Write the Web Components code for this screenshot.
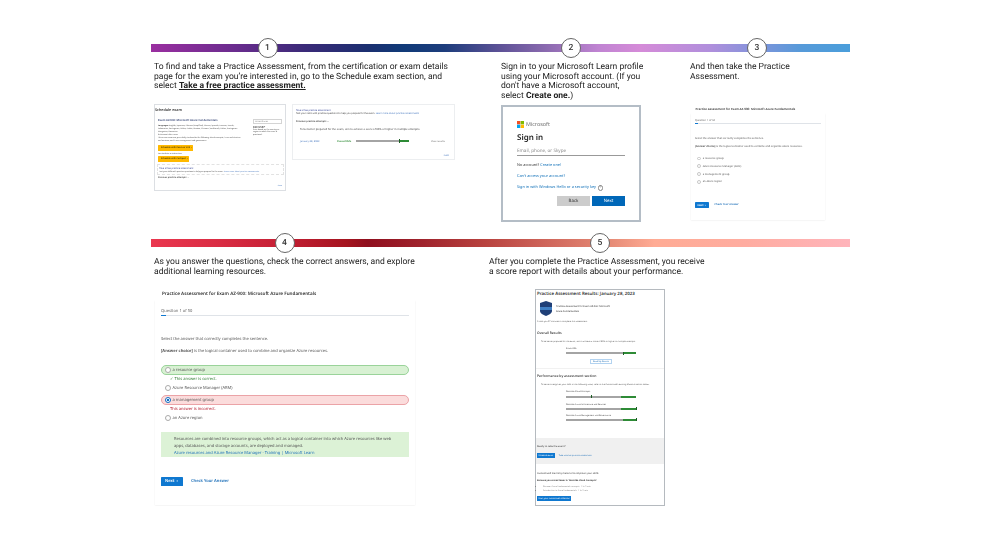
<!DOCTYPE html>
<html lang="en">
<head>
<meta charset="utf-8">
<title>Practice Assessment steps</title>
<style>
  html, body { margin: 0; background: #fff; }
  body { font-family: Roboto, "Liberation Sans", sans-serif; text-rendering: geometricPrecision; }
  .page { width: 699px; margin-left: 151px; padding-top: 44px; display: flex; flex-direction: column; gap: 17px; }
  .cols { display: grid; }
  .row1 { grid-template-columns: 347px 189px 1fr; }
  .row2 { grid-template-columns: 335px 1fr; }
  .shots { display: flex; gap: 6px; align-items: flex-start; }
</style>
</head>
<body>
<div class="page">
  <step-section>
    <step-rail slot="rail" colors="#9a2fa0 0,#6a2c8e 12%,#3a2a78 22%,#1b2f70 31%,#103a78 36%,#1d3d7c 42%,#5e5297 50%,#8768ad 56%,#c084d2 64%,#d58bd8 70%,#b08fdc 80%,#7f94db 87%,#569ad9 93%,#4a9edb 100%">
      <step-badge at="116.5">1</step-badge>
      <step-badge at="420">2</step-badge>
      <step-badge at="606">3</step-badge>
    </step-rail>
    <div class="cols row1">
      <step-column min="42">
        <span slot="text">To find and take a Practice Assessment, from the certification or exam details<br>page for the exam you’re interested in, go to the Schedule exam section, and<br>select <b><u>Take a free practice assessment.</u></b></span>
        <div class="shots">
          <schedule-shot></schedule-shot>
          <attempts-shot></attempts-shot>
        </div>
      </step-column>
      <step-column min="43">
        <span slot="text">Sign in to your Microsoft Learn profile<br>using your Microsoft account. (If you<br>don't have a Microsoft account,<br>select <b>Create one.</b>)</span>
        <signin-shot></signin-shot>
      </step-column>
      <step-column min="44">
        <span slot="text">And then take the Practice<br>Assessment.</span>
        <question-card style="--u:.648px;--ring:#c6c6c6;width:134px;margin-left:1px" after="26">
          <answer-option>a resource group</answer-option>
          <answer-option>Azure Resource Manager (ARM)</answer-option>
          <answer-option>a management group</answer-option>
          <answer-option>an Azure region</answer-option>
        </question-card>
      </step-column>
    </div>
  </step-section>

  <step-section>
    <step-rail slot="rail" colors="#ea374f 0,#d92c43 10%,#c41f34 19%,#a5141f 28%,#8f0f1e 31%,#a0242d 39%,#b9433f 48%,#d0675c 57%,#e78c77 66%,#ffab94 72%,#ffaca0 85%,#ffb4bb 100%">
      <step-badge at="133.5">4</step-badge>
      <step-badge at="449">5</step-badge>
    </step-rail>
    <div class="cols row2">
      <step-column min="32">
        <span slot="text">As you answer the questions, check the correct answers, and explore<br>additional learning resources.</span>
        <question-card style="--u:1px;--ring:#aaa;width:260px;margin-left:1px" after="20" full>
          <answer-option state="right" note="✓ This answer is correct.">a resource group</answer-option>
          <answer-option>Azure Resource Manager (ARM)</answer-option>
          <answer-option state="wrong" note="This answer is incorrect.">a management group</answer-option>
          <answer-option>an Azure region</answer-option>
        </question-card>
      </step-column>
      <step-column min="32">
        <span slot="text">After you complete the Practice Assessment, you receive<br>a score report with details about your performance.</span>
        <results-shot></results-shot>
      </step-column>
    </div>
  </step-section>
</div>

<script>
  const SHOT_FONT = '"Noto Sans", "Open Sans", sans-serif';

  class StepSection extends HTMLElement {
    constructor() {
      super();
      this.attachShadow({ mode: "open" });
      this.shadowRoot.innerHTML = `
        <style>
          :host { display: flex; flex-direction: column; gap: 10.5px; }
        </style>
        <slot name="rail"></slot>
        <slot></slot>`;
    }
  }

  class StepRail extends HTMLElement {
    constructor() {
      super();
      this.attachShadow({ mode: "open" });
    }

    connectedCallback() {
      const colors = this.getAttribute("colors");
      this.shadowRoot.innerHTML = `
        <style>
          :host { display: block; position: relative; height: 7.5px; background: linear-gradient(90deg, ${colors}); filter: blur(.3px); }
        </style>
        <slot></slot>`;
    }
  }

  // sits over the rail, "at" is the centre in px from the rail's left end
  class StepBadge extends HTMLElement {
    constructor() {
      super();
      this.attachShadow({ mode: "open" });
    }

    connectedCallback() {
      const at = this.getAttribute("at");
      this.shadowRoot.innerHTML = `
        <style>
          :host {
            position: absolute; left: ${at - 10}px; top: -6px; box-sizing: border-box;
            width: 20px; height: 20px; border-radius: 50%;
            background: #fff; border: 1px solid #666; color: #333;
            display: flex; align-items: center; justify-content: center;
            font: 500 8.5px Roboto, sans-serif;
          }
        </style>
        <slot></slot>`;
    }
  }

  class StepColumn extends HTMLElement {
    constructor() {
      super();
      this.attachShadow({ mode: "open" });
    }

    connectedCallback() {
      const min = this.getAttribute("min") || "40";
      this.shadowRoot.innerHTML = `
        <style>
          :host { display: block; padding-left: 3px; }
          .text {
            min-height: ${min}px; box-sizing: border-box; padding-top: 1px; white-space: nowrap;
            font: 8.55px/9.7px Roboto, sans-serif; color: #222; filter: blur(.4px);
          }
        </style>
        <div class="text"><slot name="text"></slot></div>
        <slot></slot>`;
    }
  }

  class ScheduleShot extends HTMLElement {
    constructor() {
      super();
      this.attachShadow({ mode: "open" });
      this.shadowRoot.innerHTML = `
        <style>
          :host {
            display: block; box-sizing: border-box; width: 132px; height: 87px; flex: none;
            border: 1.5px solid #dcdfe3; padding-top: 2.8px; background: #fff;
            font: 1.9px/3px ${SHOT_FONT}; color: #444; filter: blur(.4px);
          }
          h3 { margin: 0; font: 600 3.7px/6px ${SHOT_FONT}; color: #333; }
          .top { display: flex; justify-content: space-between; padding: 4px 3px 0 3px; height: 5px; }
          .exam { font: 600 2.75px/5px ${SHOT_FONT}; color: #3b4a78; }
          .select { width: 29px; height: 4.5px; margin-top: 1.4px; box-sizing: border-box; border: .5px solid #d4d4d4; color: #888; padding-left: 1px; font-size: 2.1px; line-height: 3.5px; }
          .body { display: grid; grid-template-columns: 95px 1fr; height: 18px; padding: 1.2px 3px 0 3px; white-space: nowrap; }
          .body .price { font: 600 2.7px/4px ${SHOT_FONT}; color: #444; margin-top: .7px; }
          .side { line-height: 2.5px; }
          .btn { display: block; margin-left: 3px; padding-left: 3px; box-sizing: border-box; height: 5.6px; background: #ffb900; color: #4a3a00; font: 600 2.2px/5.6px ${SHOT_FONT}; border-radius: .5px; }
          .or { margin-left: 3px; height: 5.4px; line-height: 5.4px; }
          .free { margin: 2.4px 1px 0 1.7px; height: 11px; box-sizing: border-box; border: .5px dashed #e2e2e2; padding: 2.8px 1.5px 0; white-space: nowrap; line-height: 2.8px; }
          .free a { display: block; color: #3b4a9a; font-size: 2.3px; }
          .free span { color: #4c7cc0; }
          .prev { margin-top: .6px; padding-left: 3px; font-weight: 600; font-size: 2.2px; line-height: 4px; color: #444; }
          .less { text-align: right; padding-right: 3px; color: #4c7cc0; line-height: 3px; margin-top: 3.5px; }
        </style>
        <h3>Schedule exam</h3>
        <div class="top"><span class="exam">Exam AZ-900: Microsoft Azure Fundamentals</span><span class="select">United States</span></div>
        <div class="body">
          <div>
            <b>Languages:</b> English, Japanese, Chinese (Simplified), Korean, Spanish, German, French,<br>
            Indonesian, Portuguese, Italian, Arabic, Russian, Chinese (Traditional), Italian, Portuguese<br>
            Hungarian, Romanian<br>
            Retirement date: none<br>
            This exam measures your ability to describe the following: cloud concepts; Azure architecture<br>
            and services; and Azure management and governance.
          </div>
          <div class="side"><div class="price">$99 USD*</div>Price based on the country or<br>region in which the exam is<br>proctored.</div>
        </div>
        <span class="btn" style="margin-top:3.5px;width:35px">Schedule with Pearson VUE &nbsp;›</span>
        <div class="or">For students or instructors</div>
        <span class="btn" style="width:31px">Schedule with Certiport &nbsp;›</span>
        <div class="free"><a>Take a free practice assessment</a>Test your skills with practice questions to help you prepare for the exam. <span>Learn more about practice assessments</span></div>
        <div class="prev">Previous practice attempts ⌄</div>
        <div class="less">↑ Less</div>`;
    }
  }

  class ScoreBar extends HTMLElement {
    constructor() {
      super();
      this.attachShadow({ mode: "open" });
    }

    connectedCallback() {
      const from = this.getAttribute("from") || "80";
      const mark = this.getAttribute("mark") || from;
      this.shadowRoot.innerHTML = `
        <style>
          :host { display: block; position: relative; height: 1.8px; background: linear-gradient(90deg, #a4a4a4 ${from}%, #2e8b36 ${from}%); }
          i { position: absolute; left: ${mark}%; top: -.7px; width: .7px; height: 3.2px; background: #1b5e22; }
        </style>
        <i></i>`;
    }
  }

  class AttemptsShot extends HTMLElement {
    constructor() {
      super();
      this.attachShadow({ mode: "open" });
      this.shadowRoot.innerHTML = `
        <style>
          :host {
            display: block; box-sizing: border-box; width: 163px; height: 56px; flex: none;
            border: 1px solid #eceef0; padding: 3.5px 3px 0 3px; background: #fff;
            font: 2.35px/3px ${SHOT_FONT}; color: #444; filter: blur(.4px); white-space: nowrap;
          }
          a { color: #3b4a9a; display: block; }
          span { color: #4c7cc0; }
          .prev { margin-top: 5px; font-weight: 600; color: #444; }
          .aim { margin: 5px 0 0 4px; font-size: 2.65px; }
          .line { display: grid; grid-template-columns: 37px 19px 53px 1fr; align-items: center; margin: 9px 0 0 4px; font-size: 2.5px; }
          .ok { color: #2e8b36; font-weight: 600; }
          .more { text-align: right; padding-right: 6px; color: #777; }
          .less { text-align: right; margin-top: 11px; padding-right: 2px; color: #4c7cc0; }
        </style>
        <a>Take a free practice assessment</a>
        Test your skills with practice questions to help you prepare for the exam. <span>Learn more about practice assessments</span>
        <div class="prev">Previous practice attempts ⌄</div>
        <div class="aim">To be better prepared for the exam, aim to achieve a score of 80% or higher in multiple attempts.</div>
        <div class="line">
          <span>January 28, 2023</span><span class="ok">Passed 85%</span>
          <score-bar from="81" mark="81"></score-bar><div class="more">View results</div>
        </div>
        <div class="less">↑ Less</div>`;
    }
  }

  class SigninShot extends HTMLElement {
    constructor() {
      super();
      this.attachShadow({ mode: "open" });
      this.shadowRoot.innerHTML = `
        <style>
          :host {
            display: block; box-sizing: border-box; width: 140px; height: 117px;
            border: 2px solid #b4bdc6; padding: 13px 14px 0 14px; background: #fff;
            font: 3.85px/5px "Noto Sans", sans-serif; color: #333; filter: blur(.35px);
          }
          .brand { display: flex; align-items: center; gap: 2px; height: 8px; color: #737373; font-size: 5.4px; }
          .brand svg { width: 7px; height: 7px; }
          h2 { margin: 3.5px 0 0; font: 600 8px/12px "Noto Sans", sans-serif; color: #222; }
          .input { margin-top: 3.5px; height: 8px; border-bottom: 1px solid #999; color: #8a8a8a; font-size: 4.6px; line-height: 8px; }
          p { margin: 0; }
          a { color: #1070b8; }
          .no { margin-top: 6.5px; }
          .cant { margin-top: 6.5px; }
          .hello { margin-top: 6px; display: flex; align-items: center; gap: 1.5px; }
          .hello i { width: 5.5px; height: 5.5px; box-sizing: border-box; border: .5px solid #888; border-radius: 50%; font: normal 3.6px/4.5px "Noto Sans", sans-serif; text-align: center; color: #666; }
          .btns { display: flex; justify-content: flex-end; gap: 2px; margin-top: 5.5px; }
          .btns span { width: 33px; height: 10px; text-align: center; font-size: 4.4px; line-height: 10px; }
          .back { background: #cccccc; color: #333; }
          .next { background: #0067b8; color: #fff; }
        </style>
        <div class="brand">
          <svg viewBox="0 0 21 21"><path fill="#f25022" d="M0 0h10v10H0z"/><path fill="#7fba00" d="M11 0h10v10H11z"/><path fill="#00a4ef" d="M0 11h10v10H0z"/><path fill="#ffb900" d="M11 11h10v10H11z"/></svg>
          Microsoft
        </div>
        <h2>Sign in</h2>
        <div class="input">Email, phone, or Skype</div>
        <p class="no">No account? <a>Create one!</a></p>
        <p class="cant"><a>Can't access your account?</a></p>
        <div class="hello"><a>Sign in with Windows Hello or a security key</a><i>?</i></div>
        <div class="btns"><span class="back">Back</span><span class="next">Next</span></div>`;
    }
  }

  // sizes are all in --u so the same card works big (step 4) and small (step 3)
  class AnswerOption extends HTMLElement {
    constructor() {
      super();
      this.attachShadow({ mode: "open" });
    }

    connectedCallback() {
      const state = this.getAttribute("state") || "";
      const note = this.getAttribute("note") || "";
      const look = {
        right: "background:#d8f1d3;border-color:#9ad39a;",
        wrong: "background:#fbdcdc;border-color:#eba3a7;",
      }[state] || "border-color:transparent;";
      const noteColor = state === "right" ? "#2f7d32" : "#b3162a";
      this.shadowRoot.innerHTML = `
        <style>
          :host { display: block; }
          .row {
            display: flex; align-items: center; box-sizing: border-box; height: calc(var(--u) * 10.5);
            margin-bottom: calc(var(--u) * 1.5); padding-left: calc(var(--u) * 2.5); gap: calc(var(--u) * 2);
            border: calc(var(--u) * .6) solid; border-radius: calc(var(--u) * 5); ${look}
          }
          .dot {
            width: calc(var(--u) * 6); height: calc(var(--u) * 6); box-sizing: border-box; flex: none;
            border: calc(var(--u) * .5) solid var(--ring); border-radius: 50%; background: #fff;
            ${state === "wrong" ? "border-color:#0f6fc6;background:radial-gradient(circle,#0f6fc6 45%,#fff 50%);" : ""}
          }
          .label { padding-top: calc(var(--u) * 1.5); }
          .note {
            height: calc(var(--u) * 7.5); margin-top: calc(var(--u) * -1.5); padding-left: calc(var(--u) * 9);
            line-height: calc(var(--u) * 9); color: ${noteColor};
          }
        </style>
        <div class="row"><span class="dot"></span><span class="label"><slot></slot></span></div>
        ${note ? `<div class="note">${note}</div>` : ""}`;
    }
  }

  class QuestionCard extends HTMLElement {
    constructor() {
      super();
      this.attachShadow({ mode: "open" });
    }

    connectedCallback() {
      const after = this.getAttribute("after") || "20";
      const full = this.hasAttribute("full");
      this.shadowRoot.innerHTML = `
        <style>
          :host {
            display: block; --x: calc(var(--u) * 6); color: #555;
            font: calc(var(--u) * 4.05)/calc(var(--u) * 6) "Noto Sans", sans-serif; filter: blur(.35px);
          }
          .title { height: calc(var(--u) * 11); padding-left: calc(var(--u) * 7); font-weight: 600; font-size: calc(var(--u) * 4.6); line-height: calc(var(--u) * 11); color: #333; }
          .card { background: #fff; box-shadow: 0 .5px 1.5px rgba(0,0,0,.1); padding: calc(var(--u) * 8.5) var(--x) calc(var(--u) * 18.5); }
          .count { line-height: calc(var(--u) * 6); color: #666; }
          .track { position: relative; height: calc(var(--u) * .8); margin-top: calc(var(--u) * .5); background: #dfe3e8; }
          .track i { position: absolute; left: 0; top: calc(var(--u) * -.2); width: calc(var(--u) * 5); height: calc(var(--u) * 1.2); background: #0f78d0; }
          p { margin: 0; }
          .ask { margin-top: calc(var(--u) * 21); }
          .stem { margin-top: calc(var(--u) * 6); }
          .list { margin-top: calc(var(--u) * 10); }
          .why {
            margin-top: calc(var(--u) * 9); background: #dcf2d6; padding: calc(var(--u) * 3.5) 0 0 calc(var(--u) * 13);
            line-height: calc(var(--u) * 7); height: calc(var(--u) * 24.5); box-sizing: border-box;
          }
          .why a { color: #1d6fb8; }
          .acts { display: flex; align-items: center; gap: calc(var(--u) * 8); margin-top: calc(var(--u) * ${after}); }
          .next { width: calc(var(--u) * 22); height: calc(var(--u) * 9.5); background: #0f78d0; color: #fff; font-weight: 600; padding-left: calc(var(--u) * 4); box-sizing: border-box; line-height: calc(var(--u) * 9.5); border-radius: calc(var(--u) * .6); }
          .check { color: #1d6fb8; font-weight: 600; }
        </style>
        <div class="title">Practice Assessment for Exam AZ-900: Microsoft Azure Fundamentals</div>
        <div class="card">
          <div class="count">Question 1 of 50</div>
          <div class="track"><i></i></div>
          <p class="ask">Select the answer that correctly completes the sentence.</p>
          <p class="stem"><b>[Answer choice]</b> is the logical container used to combine and organize Azure resources.</p>
          <div class="list"><slot></slot></div>
          ${full ? `<div class="why">Resources are combined into resource groups, which act as a logical container into which Azure resources like web<br>apps, databases, and storage accounts, are deployed and managed.<br><a>Azure resources and Azure Resource Manager - Training | Microsoft Learn</a></div>` : ""}
          <div class="acts"><span class="next">Next &nbsp;›</span><span class="check">Check Your Answer</span></div>
        </div>`;
    }
  }

  class ResultsShot extends HTMLElement {
    constructor() {
      super();
      this.attachShadow({ mode: "open" });
      this.shadowRoot.innerHTML = `
        <style>
          :host {
            display: block; box-sizing: border-box; width: 130px; height: 217px; margin-left: 46px;
            border: 1px solid #b5babf; background: #fff; padding-top: 1px;
            font: 2.1px/3px "Noto Sans", sans-serif; color: #555; filter: blur(.4px); white-space: nowrap;
          }
          h3 { margin: 0; padding-left: 1px; font: 600 4.4px/7px "Noto Sans", sans-serif; color: #333; }
          .exam { display: flex; align-items: center; gap: 4px; padding-left: 4px; height: 21.5px; color: #333; font-size: 2.4px; line-height: 5px; }
          .exam svg { width: 12px; height: 15px; flex: none; }
          .note { padding-left: 1px; }
          .sub { padding-left: 5px; margin-top: 5px; }
          h4 { margin: 0; padding-left: 1px; font: 600 3.4px/5px "Noto Sans", sans-serif; color: #444; }
          .bars { margin-left: 30px; width: 70px; }
          .bars label { display: block; line-height: 3px; color: #444; }
          .read { display: block; width: 22px; margin: 4.7px 0 0 54px; box-sizing: border-box; height: 5px; border: .5px solid #b3d3f0; color: #1d6fb8; text-align: center; line-height: 4px; }
          hr { border: 0; border-top: .5px solid #f1f1f1; margin: 4.5px 0 0; }
          .ready { margin-top: 17.5px; background: #f0f0f0; height: 26px; padding: 6.5px 1px 0; box-sizing: border-box; color: #333; font-size: 2.5px; }
          .btnrow { display: flex; align-items: center; gap: 4px; margin-top: 5.2px; color: #1d6fb8; font-size: 2.1px; }
          .blue { background: #0f78d0; color: #fff; padding: 0 1.5px; line-height: 5.3px; font-size: 2.1px; }
          .learn { padding: 7.8px 1px 0; color: #333; font-size: 2.55px; }
          .learn b { display: block; margin-top: 4px; font-size: 2.2px; }
          ul { margin: 3.2px 0 2.3px; padding-left: 6px; color: #777; font-size: 2px; line-height: 4px; }
        </style>
        <h3>Practice Assessment Results: January 28, 2023</h3>
        <div class="exam">
          <svg viewBox="0 0 12 15"><path fill="#1f3f77" d="M6 0l6 2v8c0 2-3 4-6 5-3-1-6-3-6-5V2z"/><path fill="#3f7fc4" d="M0 6h12v3H0z"/></svg>
          <span>Practice Assessment for Exam AZ-900: Microsoft<br>Azure Fundamentals</span>
        </div>
        <div class="note">It took you 27 minutes to complete this assessment.</div>
        <h4 style="margin-top:7px">Overall Results</h4>
        <div class="sub">To be better prepared for the exam, aim to achieve a score of 80% or higher in multiple attempts.</div>
        <div class="bars" style="margin-top:4.3px"><label>Score: 85%</label><score-bar from="81" mark="81" style="margin-top:2.4px"></score-bar></div>
        <span class="read">Read My Results</span>
        <hr>
        <h4 style="margin-top:4px">Performance by assessment section</h4>
        <div class="sub">To better strengthen your skills in the following areas, refer to the Customized Learning Material section below.</div>
        <div class="bars" style="margin-top:4px"><label>Describe Cloud Concepts</label><score-bar from="78" mark="36" style="margin-top:2.7px"></score-bar></div>
        <div class="bars" style="margin-top:5px"><label>Describe Azure Architecture and Services</label><score-bar from="78" mark="100" style="margin-top:2.1px"></score-bar></div>
        <div class="bars" style="margin-top:4.3px"><label>Describe Azure Management and Governance</label><score-bar from="82" mark="100" style="margin-top:2.1px"></score-bar></div>
        <div class="ready">
          Ready to take the exam?
          <div class="btnrow"><span class="blue">Schedule exam</span><span>Take another practice assessment</span></div>
        </div>
        <div class="learn">
          Customized learning material to improve your skills
          <b>Because you scored lower in 'Describe Cloud Concepts':</b>
          <ul><li>Discover Azure fundamentals concepts - 1 hr 5 min</li><li>Introduction to Azure fundamentals - 1 hr 5 min</li></ul>
          <span class="blue" style="display:inline-block">Start your customized collection</span>
        </div>`;
    }
  }

  customElements.define("step-section", StepSection);
  customElements.define("step-rail", StepRail);
  customElements.define("step-badge", StepBadge);
  customElements.define("step-column", StepColumn);
  customElements.define("schedule-shot", ScheduleShot);
  customElements.define("score-bar", ScoreBar);
  customElements.define("attempts-shot", AttemptsShot);
  customElements.define("signin-shot", SigninShot);
  customElements.define("answer-option", AnswerOption);
  customElements.define("question-card", QuestionCard);
  customElements.define("results-shot", ResultsShot);
</script>
</body>
</html>
